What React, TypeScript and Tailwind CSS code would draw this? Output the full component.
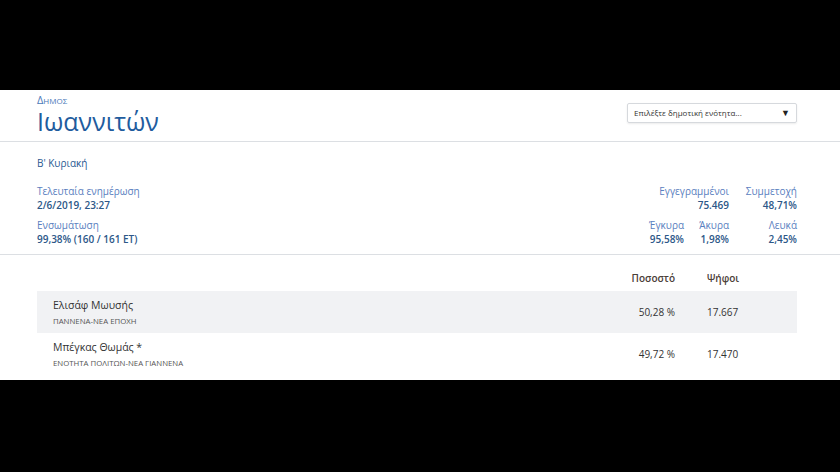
// Election results card for a municipality
const candidates = [
  { name: "Ελισάφ Μωυσής", party: "ΠΑΝΝΕΝΑ-ΝΕΑ ΕΠΟΧΗ", pct: "50,28 %", votes: "17.667", shade: true },
  { name: "Μπέγκας Θωμάς *", party: "ΕΝΟΤΗΤΑ ΠΟΛΙΤΩΝ-ΝΕΑ ΓΙΑΝΝΕΝΑ", pct: "49,72 %", votes: "17.470", shade: false },
];

const App = () => {
  return (
    <div
      className="w-[840px] h-[472px] bg-black flex flex-col"
      style={{ fontFamily: '"Open Sans", "Noto Sans", sans-serif' }}
    >
      <div className="h-[90px]" />
      <div className="bg-white h-[290px] flex flex-col">
        {/* Header: municipality + selector */}
        <div className="h-[52px] flex justify-between border-b border-[#dcdfe3] pl-[37px] pr-[43px]">
          <div className="flex flex-col pt-[4px]">
            <span className="text-[11px] leading-[11px] text-[#4a78b8] [font-variant:small-caps]">Δημος</span>
            <span className="text-[25px] leading-[26px] mt-[3px] text-[#1f5c9e]">Ιωαννιτών</span>
          </div>
          <div className="pt-[13px]">
            <div className="w-[170px] h-[20px] border border-[#d6d9dd] rounded-[2px] shadow-[0_1px_2px_rgba(0,0,0,0.08)] flex items-center justify-between pl-[6px] pr-[6px]">
              <span className="text-[8px] text-[#333]">Επιλέξτε δημοτική ενότητα...</span>
              <span className="text-[9px] text-[#222]">▼</span>
            </div>
          </div>
        </div>

        {/* Summary info */}
        <div className="h-[113px] border-b border-[#dcdfe3] pl-[37px] pr-[43px] pt-[14px] flex flex-col">
          <span className="text-[10px] leading-[14px] text-[#2a5a92]">Β' Κυριακή</span>
          <div className="flex justify-between mt-[14px]">
            <div className="flex flex-col text-[10px] leading-[14px]">
              <span className="text-[#5a80c0]">Τελευταία ενημέρωση</span>
              <span className="text-[#2c5788] font-semibold">2/6/2019, 23:27</span>
              <span className="text-[#5a80c0] mt-[6px]">Ενσωμάτωση</span>
              <span className="text-[#2c5788] font-semibold">99,38% (160 / 161 ET)</span>
            </div>
            <div className="flex flex-col text-[10px] leading-[14px] text-right">
              <div className="flex justify-end">
                <div className="flex flex-col">
                  <span className="text-[#5a80c0]">Εγγεγραμμένοι</span>
                  <span className="text-[#2c5788] font-semibold">75.469</span>
                </div>
                <div className="w-[68px] flex flex-col">
                  <span className="text-[#5a80c0]">Συμμετοχή</span>
                  <span className="text-[#2c5788] font-semibold">48,71%</span>
                </div>
              </div>
              <div className="flex justify-end mt-[6px]">
                <div className="flex flex-col">
                  <span className="text-[#5a80c0]">Έγκυρα</span>
                  <span className="text-[#2c5788] font-semibold">95,58%</span>
                </div>
                <div className="w-[45px] flex flex-col">
                  <span className="text-[#5a80c0]">Άκυρα</span>
                  <span className="text-[#2c5788] font-semibold">1,98%</span>
                </div>
                <div className="w-[68px] flex flex-col">
                  <span className="text-[#5a80c0]">Λευκά</span>
                  <span className="text-[#2c5788] font-semibold">2,45%</span>
                </div>
              </div>
            </div>
          </div>
        </div>

        {/* Results table */}
        <div className="pl-[37px] pr-[43px] flex flex-col">
          <div className="h-[36px] flex items-center pt-[10px] text-[10px] font-semibold text-[#4b4038]">
            <span className="flex-1" />
            <span className="w-[80px] text-right">Ποσοστό</span>
            <span className="w-[32px]" />
            <span className="w-[90px]">Ψήφοι</span>
          </div>
          {candidates.map((c) => (
            <div
              key={c.name}
              className={`h-[42px] flex items-center pl-[16px] ${c.shade ? "bg-[#f1f2f4]" : ""}`}
            >
              <div className="flex-1 flex flex-col">
                <span className="text-[10.5px] leading-[15px] text-[#333]">{c.name}</span>
                <span className="text-[7.8px] leading-[12px] text-[#555] mt-[2px]">{c.party}</span>
              </div>
              <span className="w-[80px] text-right text-[10px] text-[#333]">{c.pct}</span>
              <span className="w-[32px]" />
              <span className="w-[90px] text-[10px] text-[#333]">{c.votes}</span>
            </div>
          ))}
        </div>
      </div>
    </div>
  );
};

export default App;
